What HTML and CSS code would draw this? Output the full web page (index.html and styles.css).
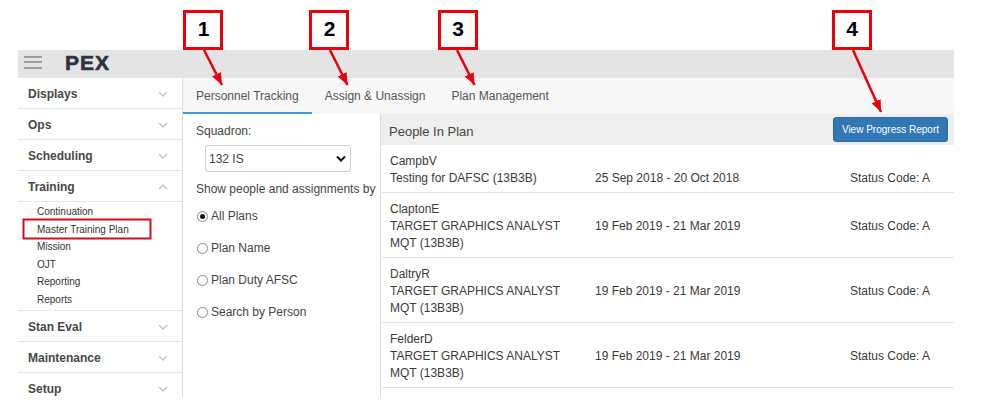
FILE: index.html
```html
<!DOCTYPE html>
<html lang="en">
<head>
<meta charset="utf-8">
<title>PEX - Master Training Plan</title>
<link rel="stylesheet" href="styles.css">
</head>
<body>
<div class="page">
  <div class="app">
    <header class="topbar">
      <div class="brand">
        <span class="hamburger"><i></i><i></i><i></i></span>
        <span class="logo">PEX</span>
      </div>
    </header>

    <nav class="sidebar">
      <div class="nav-item"><span>Displays</span><svg class="chev" viewBox="0 0 10 6"><polyline points="1,1 5,5 9,1"/></svg></div>
      <div class="nav-item"><span>Ops</span><svg class="chev" viewBox="0 0 10 6"><polyline points="1,1 5,5 9,1"/></svg></div>
      <div class="nav-item"><span>Scheduling</span><svg class="chev" viewBox="0 0 10 6"><polyline points="1,1 5,5 9,1"/></svg></div>
      <div class="nav-item open"><span>Training</span><svg class="chev" viewBox="0 0 10 6"><polyline points="1,5 5,1 9,5"/></svg></div>
      <ul class="submenu">
        <li>Continuation</li>
        <li>Master Training Plan</li>
        <li>Mission</li>
        <li>OJT</li>
        <li>Reporting</li>
        <li>Reports</li>
      </ul>
      <div class="nav-item"><span>Stan Eval</span><svg class="chev" viewBox="0 0 10 6"><polyline points="1,1 5,5 9,1"/></svg></div>
      <div class="nav-item"><span>Maintenance</span><svg class="chev" viewBox="0 0 10 6"><polyline points="1,1 5,5 9,1"/></svg></div>
      <div class="nav-item"><span>Setup</span><svg class="chev" viewBox="0 0 10 6"><polyline points="1,1 5,5 9,1"/></svg></div>
    </nav>

    <main class="main">
      <div class="tabs">
        <div class="tab active">Personnel Tracking</div>
        <div class="tab">Assign &amp; Unassign</div>
        <div class="tab">Plan Management</div>
      </div>
      <div class="content">
        <aside class="filters">
          <div class="label">Squadron:</div>
          <div class="select">
            <span>132 IS</span>
            <svg class="select-chev" viewBox="0 0 10 7"><polyline points="1,1.5 5,5.5 9,1.5"/></svg>
          </div>
          <div class="label show-by">Show people and assignments by</div>
          <div class="radio-row"><span class="radio checked"></span><span>All Plans</span></div>
          <div class="radio-row"><span class="radio"></span><span>Plan Name</span></div>
          <div class="radio-row"><span class="radio"></span><span>Plan Duty AFSC</span></div>
          <div class="radio-row"><span class="radio"></span><span>Search by Person</span></div>
        </aside>

        <section class="people">
          <div class="people-head">
            <span class="people-title">People In Plan</span>
            <button class="btn-primary" type="button">View Progress Report</button>
          </div>
          <div class="person">
            <div class="pname">CampbV</div>
            <div class="pdetail">
              <div class="desc">Testing for DAFSC (13B3B)</div>
              <div class="dates">25 Sep 2018 - 20 Oct 2018</div>
              <div class="status">Status Code: A</div>
            </div>
          </div>
          <div class="person">
            <div class="pname">ClaptonE</div>
            <div class="pdetail">
              <div class="desc">TARGET GRAPHICS ANALYST MQT (13B3B)</div>
              <div class="dates">19 Feb 2019 - 21 Mar 2019</div>
              <div class="status">Status Code: A</div>
            </div>
          </div>
          <div class="person">
            <div class="pname">DaltryR</div>
            <div class="pdetail">
              <div class="desc">TARGET GRAPHICS ANALYST MQT (13B3B)</div>
              <div class="dates">19 Feb 2019 - 21 Mar 2019</div>
              <div class="status">Status Code: A</div>
            </div>
          </div>
          <div class="person">
            <div class="pname">FelderD</div>
            <div class="pdetail">
              <div class="desc">TARGET GRAPHICS ANALYST MQT (13B3B)</div>
              <div class="dates">19 Feb 2019 - 21 Mar 2019</div>
              <div class="status">Status Code: A</div>
            </div>
          </div>
        </section>
      </div>
    </main>
  </div>
</div>

<svg class="annotations" viewBox="0 0 981 406" width="981" height="406">
  <defs>
    <marker id="ah" markerUnits="userSpaceOnUse" markerWidth="12" markerHeight="10" refX="12" refY="5" orient="auto">
      <path d="M0,0 L12,5 L0,10 z" class="ah-fill"/>
    </marker>
  </defs>
  <rect class="callout" x="184.5" y="11.5" width="37" height="37"/>
  <text class="num" x="203.5" y="36">1</text>
  <rect class="callout" x="310.5" y="11.5" width="37" height="37"/>
  <text class="num" x="329.5" y="36">2</text>
  <rect class="callout" x="439.5" y="11.5" width="37" height="37"/>
  <text class="num" x="458" y="36">3</text>
  <rect class="callout" x="833.5" y="11.5" width="37" height="37"/>
  <text class="num" x="852" y="36">4</text>
  <line class="arrow" x1="204" y1="50" x2="222" y2="85" marker-end="url(#ah)"/>
  <line class="arrow" x1="330" y1="50" x2="347.5" y2="85" marker-end="url(#ah)"/>
  <line class="arrow" x1="457" y1="50" x2="474.5" y2="85" marker-end="url(#ah)"/>
  <line class="arrow" x1="853" y1="50" x2="881" y2="112" marker-end="url(#ah)"/>
  <rect class="highlight" x="23.5" y="219.5" width="127" height="19"/>
</svg>
</body>
</html>
```

FILE: styles.css
```css
* { box-sizing: border-box; }

html, body {
  margin: 0;
  padding: 0;
  background: #ffffff;
}

body {
  font-family: "Liberation Sans", Arial, sans-serif;
  color: #333;
  width: 981px;
  height: 406px;
  overflow: hidden;
  position: relative;
}

.page {
  padding: 50px 0 0 18px;
}

.app {
  display: grid;
  grid-template-columns: 165px 771px;
  grid-template-rows: 28px 319px;
  height: 347px;
  overflow: hidden;
}

/* top bar */
.topbar {
  grid-column: 1 / 3;
  background: #e4e4e4;
  display: flex;
  align-items: center;
}

.brand {
  display: flex;
  align-items: center;
  padding-left: 6px;
}

.hamburger {
  display: flex;
  flex-direction: column;
  gap: 3.5px;
  width: 18px;
  margin-bottom: 4px;
}

.hamburger i {
  display: block;
  height: 2px;
  background: #9e9e9e;
}

.logo {
  margin-left: 23px;
  font-size: 21px;
  font-weight: 700;
  letter-spacing: 1px;
  color: #2e3243;
  line-height: 1;
  margin-bottom: 3px;
  -webkit-text-stroke: 0.6px #2e3243;
}

/* sidebar */
.sidebar {
  border-right: 1px solid #dcdcdc;
  background: #fff;
}

.nav-item {
  height: 31px;
  border-bottom: 1px solid #e6e6e6;
  display: flex;
  align-items: center;
  justify-content: space-between;
  padding: 2px 14px 0 10px;
  font-size: 12px;
  font-weight: 700;
  color: #474747;
}

.chev {
  width: 10px;
  height: 6px;
}

.chev polyline {
  fill: none;
  stroke: #c2c2c2;
  stroke-width: 1.3;
}

.submenu {
  list-style: none;
  margin: 0;
  padding: 1px 0 1px 19px;
  border-bottom: 1px solid #e6e6e6;
  font-size: 10px;
  line-height: 17.6px;
  color: #333;
}

/* main */
.main {
  display: flex;
  flex-direction: column;
  min-width: 0;
}

.tabs {
  height: 36px;
  background: #f7f7f7;
  display: flex;
}

.tab {
  padding: 1px 13px 0;
  font-size: 12px;
  line-height: 35px;
  color: #555;
}

.tab.active {
  box-shadow: inset 0 -2px 0 #3d9ae0;
}

.content {
  flex: 1;
  display: grid;
  grid-template-columns: 198px 573px;
}

/* filters */
.filters {
  border-right: 1px solid #dcdcdc;
  padding: 9px 0 0 13px;
  font-size: 12px;
  color: #444;
}

.label {
  line-height: 16px;
}

.select {
  margin: 6px 0 0 9px;
  width: 146px;
  height: 27px;
  border: 1px solid #cfcfcf;
  border-radius: 3px;
  display: flex;
  align-items: center;
  justify-content: space-between;
  padding: 0 4px 0 3px;
  color: #444;
}

.select-chev {
  width: 10px;
  height: 7px;
}

.select-chev polyline {
  fill: none;
  stroke: #111;
  stroke-width: 2;
}

.show-by {
  margin-top: 9px;
}

.radio-row {
  height: 32px;
  display: flex;
  align-items: center;
  gap: 3px;
}

.show-by + .radio-row {
  margin-top: 3px;
}

.radio {
  width: 11px;
  height: 11px;
  margin-left: 1px;
  border: 1px solid #8a8a8a;
  border-radius: 50%;
  display: flex;
  align-items: center;
  justify-content: center;
  background: #fff;
}

.radio.checked::after {
  content: "";
  width: 5px;
  height: 5px;
  border-radius: 50%;
  background: #111;
}

/* people list */
.people {
  font-size: 12px;
  color: #3a3a3a;
}

.people-head {
  height: 31px;
  background: #eeeeee;
  display: flex;
  align-items: center;
  justify-content: space-between;
  padding: 0 6px 0 8px;
}

.people-title {
  font-size: 13px;
  color: #444;
  padding-top: 3px;
}

.btn-primary {
  height: 25px;
  padding: 0 8px;
  background: #3278b5;
  border: 1px solid #2d6ca2;
  border-radius: 3px;
  color: #fff;
  font-family: "Liberation Sans", Arial, sans-serif;
  font-size: 10px;
}

.person {
  margin-left: 1px;
  padding: 8px 0 5px 8px;
  border-bottom: 1px solid #e2e2e2;
  line-height: 17px;
}

.pdetail {
  display: flex;
  align-items: flex-start;
}

.desc {
  width: 205px;
  padding-right: 15px;
}

.dates {
  width: 255px;
}

/* annotation overlay */
.annotations {
  position: absolute;
  left: 0;
  top: 0;
  pointer-events: none;
}

.callout {
  fill: #fff;
  stroke: #e8000b;
  stroke-width: 3;
}

.num {
  font-family: "Liberation Sans", Arial, sans-serif;
  font-weight: 700;
  font-size: 21px;
  fill: #000;
  text-anchor: middle;
}

.arrow {
  stroke: #e8000b;
  stroke-width: 2.5;
}

.ah-fill {
  fill: #e8000b;
}

.highlight {
  fill: none;
  stroke: #cc1020;
  stroke-width: 2;
}
```
